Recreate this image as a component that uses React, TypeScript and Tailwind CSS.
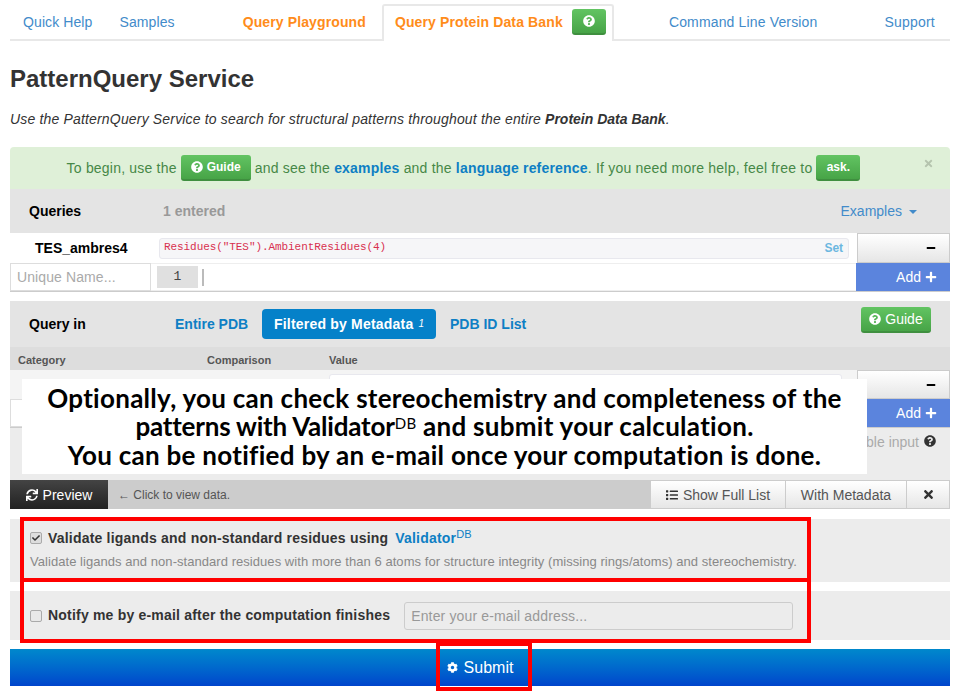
import { FaCheck, FaCog, FaList, FaMinus, FaPlus, FaQuestionCircle, FaSync, FaTimes } from 'react-icons/fa'

const GreenButton = ({ children, className }: { children: React.ReactNode; className: string }) => (
  <span
    className={`inline-flex items-center justify-center rounded-[3px] border-b-2 border-[#3f8f3f] bg-gradient-to-b from-[#62c462] to-[#47a447] tracking-normal text-white ${className}`}
  >
    {children}
  </span>
)

const LightCell = ({ children, className }: { children: React.ReactNode; className: string }) => (
  <div className={`flex items-center border border-[#ccc] bg-gradient-to-b from-white to-[#e6e6e6] ${className}`}>
    {children}
  </div>
)

const AddRow = ({ name, line }: { name: string; line?: string }) => (
  <div className="flex h-[29px] border-b border-[#ccc]">
    <div className="flex w-[141px] items-center border border-[#ddd] bg-white pl-[6px] text-sm tracking-[0.1px] text-[#aaa]">
      {name}
    </div>
    <div className="flex flex-1 items-center border-y border-[#eee] bg-white pl-[6px]">
      {line && (
        <>
          <div className="flex h-[22px] w-[41px] items-center justify-center bg-[#e0e0e0] pt-[1px] font-['Liberation_Mono',monospace] text-[13px] text-[#444]">
            {line}
          </div>
          <div className="ml-1 h-[17px] w-[2px] bg-[#bbb]" />
        </>
      )}
    </div>
    <div className="flex w-[94px] items-center justify-end gap-[4px] bg-[#5b84dd] pr-[13px] text-sm text-white">
      Add <FaPlus className="size-[12px]" />
    </div>
  </div>
)

const App = () => {
  return (
    <div className="relative h-[691px] w-[968px] overflow-hidden bg-white pr-[18px] pl-[10px] font-['Liberation_Sans',Arial,sans-serif] text-sm text-[#333]">
      {/* tabs */}
      <div className="flex h-[41px] items-end border-b-2 border-[#e8e8e8] text-sm">
        <a className="mb-[7px] ml-[13px] tracking-[0.1px] text-[#428bca]">Quick Help</a>
        <a className="mb-[7px] ml-[27px] tracking-[0.1px] text-[#428bca]">Samples</a>
        <a className="mb-[7px] ml-[68px] font-bold tracking-[0.12px] text-[#ff8c1a]">Query Playground</a>
        <div className="-mb-[2px] ml-[16px] flex h-[37px] w-[232px] items-center rounded-t-[3px] border-2 border-b-0 border-[#e8e8e8] bg-white pb-[3px] pl-[11px]">
          <span className="font-bold tracking-[0.13px] text-[#ff8c1a]">Query Protein Data Bank</span>
          <GreenButton className="ml-[9px] h-[26px] w-[34px]">
            <FaQuestionCircle className="size-[12px]" />
          </GreenButton>
        </div>
        <a className="mb-[7px] ml-[55px] tracking-[0.15px] text-[#428bca]">Command Line Version</a>
        <a className="mb-[7px] ml-[67px] tracking-[0.2px] text-[#428bca]">Support</a>
      </div>

      <h1 className="mt-[24px] text-2xl leading-[28px] font-bold text-[#333]">PatternQuery Service</h1>
      <p className="mt-[16px] leading-[20px] tracking-[0.17px] text-[#333] italic">
        Use the PatternQuery Service to search for structural patterns throughout the entire{' '}
        <b className="tracking-normal">Protein Data Bank</b>.
      </p>

      {/* alert */}
      <div className="relative mt-[18px] flex h-[42px] items-center justify-center rounded-t-[4px] bg-[#dff0d8] pr-[33px] text-[#468847]">
        <div className="flex items-center tracking-[0.2px]">
          To begin, use the
          <GreenButton className="mx-[4px] h-[26px] w-[70px] gap-[4px] text-xs font-bold">
            <FaQuestionCircle className="size-[12px]" /> Guide
          </GreenButton>
          and see the&nbsp;<b className="text-[#0e7fc4]">examples</b>&nbsp;and the&nbsp;
          <b className="text-[#0e7fc4]">language reference</b>. If you need more help, feel free to
          <GreenButton className="ml-[4px] h-[26px] w-[44px] text-xs font-bold">ask.</GreenButton>
        </div>
        <FaTimes className="absolute top-[11px] right-[16px] size-[11px] text-[#b5c4ae]" />
      </div>

      {/* queries */}
      <div className="flex h-[44px] items-center bg-[#e4e4e4] pr-[33px] pl-[19px]">
        <b className="w-[134px] text-black">Queries</b>
        <b className="text-[#999]">1 entered</b>
        <span className="ml-auto flex items-center gap-[7px] text-[#428bca]">
          Examples{' '}
          <span className="mt-[2px] border-x-[4px] border-t-[4px] border-x-transparent border-t-[#428bca]" />
        </span>
      </div>
      <div className="flex h-[30px] items-center">
        <b className="w-[149px] pl-[25px] text-black">TES_ambres4</b>
        <div className="flex h-[21px] flex-1 items-center justify-between rounded-[3px] border border-[#e8e8ee] bg-[#f6f6f8] pr-[5px] pl-[4px] font-['Liberation_Mono',monospace] text-[11px] tracking-[-0.07px] text-[#d8304f]">
          Residues("TES").AmbientResidues(4)
          <b className="font-['Liberation_Sans',sans-serif] text-xs text-[#6cb7e0]">Set</b>
        </div>
        <LightCell className="ml-[8px] h-[30px] w-[93px] justify-end pr-[13px] text-black">
          <FaMinus className="size-[10px]" />
        </LightCell>
      </div>
      <AddRow name="Unique Name..." line="1" />

      {/* query in */}
      <div className="relative mt-[9px] flex h-[46px] items-center bg-[#e4e4e4] pl-[19px]">
        <b className="w-[146px] text-black">Query in</b>
        <b className="w-[87px] text-[#0e7fc4]">Entire PDB</b>
        <b className="flex h-[30px] w-[174px] items-center rounded-[4px] bg-[#0581c9] pl-[12px] tracking-[0.2px] text-white">
          Filtered by Metadata <i className="ml-[5px] text-[10px] font-normal">1</i>
        </b>
        <b className="ml-[14px] text-[#0e7fc4]">PDB ID List</b>
        <GreenButton className="absolute top-[6px] right-[19px] h-[26px] w-[70px] gap-[4px] text-sm">
          <FaQuestionCircle className="size-[12px]" /> Guide
        </GreenButton>
      </div>
      <div className="flex h-[23px] items-center bg-[#ddd] pt-[5px] pl-[8px] text-[11px] font-bold text-[#555]">
        <span className="w-[189px]">Category</span>
        <span className="w-[122px]">Comparison</span>
        <span>Value</span>
      </div>
      <div className="flex h-[29px] items-center bg-[#f4f4f4]">
        <div className="ml-[319px] h-[21px] flex-1 rounded-[3px] border border-[#e8e8ee] bg-white" />
        <LightCell className="ml-[15px] h-[29px] w-[93px] justify-end pr-[13px] text-black">
          <FaMinus className="size-[10px]" />
        </LightCell>
      </div>
      <AddRow name="" />
      <div className="flex h-[52px] items-start justify-end bg-[#ececec] pt-[4px] pr-[14px] text-[#aaa]">
        Disable input <FaQuestionCircle className="mt-[3px] ml-[5px] size-[12px] text-[#333]" />
      </div>

      {/* preview toolbar */}
      <div className="flex h-[29px] items-center bg-[#ccc]">
        <div className="flex h-full w-[98px] items-center justify-center gap-[5px] bg-gradient-to-b from-[#444] to-[#222] text-white">
          <FaSync className="size-[12px]" /> Preview
        </div>
        <span className="ml-[10px] text-xs text-[#555]">← Click to view data.</span>
        <LightCell className="ml-auto h-full w-[136px] justify-center gap-[5px] text-[#555]">
          <FaList className="size-[12px] text-[#333]" /> Show Full List
        </LightCell>
        <LightCell className="-ml-px h-full w-[122px] justify-center text-[#555]">With Metadata</LightCell>
        <LightCell className="-ml-px h-full w-[44px] justify-center text-[#333]">
          <FaTimes className="size-[13px]" />
        </LightCell>
      </div>

      {/* options */}
      <div className="mt-[10px] h-[63px] bg-[#ececec] pt-[9px] pl-[20px]">
        <div className="flex items-center">
          <span className="flex size-[12px] items-center justify-center rounded-[2px] border border-[#aaa] bg-[#ddd]">
            <FaCheck className="size-[8px] text-[#333]" />
          </span>
          <b className="ml-[6px] tracking-[0.2px] text-[#333]">Validate ligands and non-standard residues using</b>
          <b className="ml-[7px] tracking-[0.2px] text-[#0e7fc4]">
            Validator<sup className="text-[11px] font-normal">DB</sup>
          </b>
        </div>
        <p className="mt-[6px] text-[13px] leading-[16px] tracking-[0.05px] text-[#888]">
          Validate ligands and non-standard residues with more than 6 atoms for structure integrity (missing
          rings/atoms) and stereochemistry.
        </p>
      </div>
      <div className="mt-[9px] flex h-[49px] items-center bg-[#ececec] pl-[20px]">
        <span className="size-[12px] rounded-[2px] border border-[#aaa] bg-[#e8e8e8]" />
        <b className="mb-[2px] ml-[6px] tracking-[0.2px] text-[#333]">Notify me by e-mail after the computation finishes</b>
        <div className="ml-[14px] flex h-[28px] w-[389px] items-center rounded-[3px] border border-[#ccc] pl-[6px] tracking-[0.15px] text-[#999]">
          Enter your e-mail address...
        </div>
      </div>
      <div className="mt-[9px] flex h-[37px] items-center justify-center gap-[6px] bg-gradient-to-b from-[#0088cc] to-[#0044cc] text-base text-white">
        <FaCog className="size-[11px]" /> Submit
      </div>

      {/* annotation laid over the screenshot */}
      <div className="absolute top-[379px] left-[22px] flex h-[95px] w-[845px] flex-col items-center justify-center bg-white font-['Lato',sans-serif] text-[26px] leading-[28.5px] font-bold tracking-[0.28px] text-black">
        <span>Optionally, you can check stereochemistry and completeness of the</span>
        <span>
          <span className="tracking-[-0.2px]">patterns with Validator</span>
          <sup className="text-[15px] font-normal">DB</sup> and submit your calculation.
        </span>
        <span>You can be notified by an e-mail once your computation is done.</span>
      </div>
      <div className="absolute top-[517px] left-[20px] h-[65px] w-[791px] border-[4px] border-[#f00]" />
      <div className="absolute top-[578px] left-[20px] h-[65px] w-[791px] border-[4px] border-[#f00]" />
      <div className="absolute top-[642px] left-[436px] h-[49px] w-[96px] border-[4px] border-[#f00]" />
    </div>
  )
}

export default App
